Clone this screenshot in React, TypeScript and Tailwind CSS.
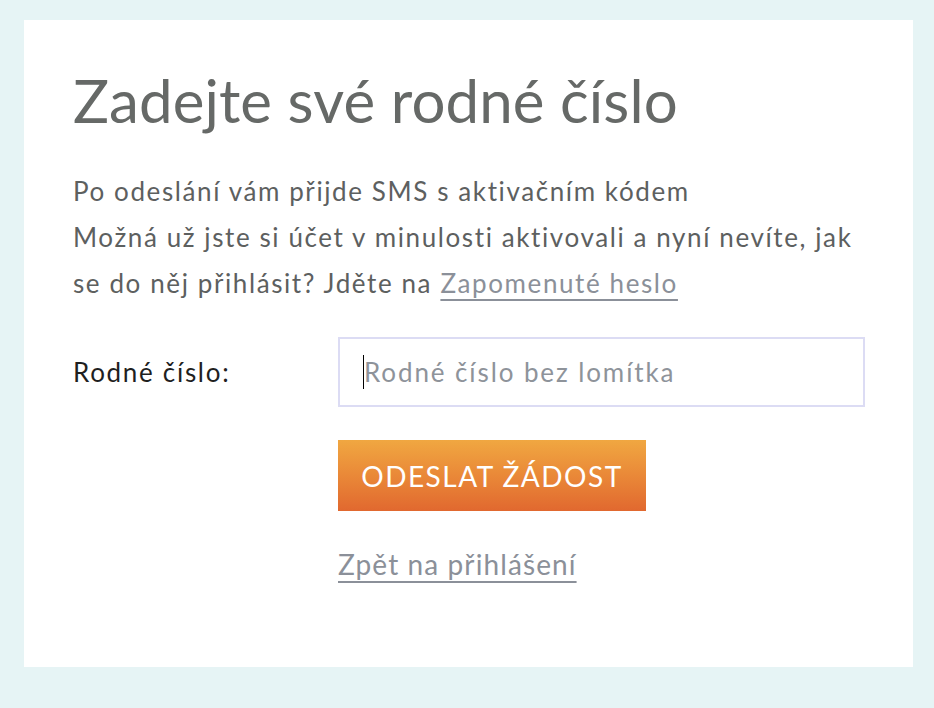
import React from "react";

export default function App() {
  return (
    <div className="min-h-[708px] w-full bg-[#e6f4f5] pt-[20px] pb-[41px] pl-[24px] pr-[21px]" style={{ fontFamily: "Lato, 'Open Sans', sans-serif" }}>
      <div className="h-[647px] bg-white pl-[49px] pr-[48px] pt-[48px]">
        <h1 className="text-[60px] leading-[64px] text-[#666967] font-normal tracking-[0.1px] whitespace-nowrap">Zadejte své rodné číslo</h1>
        <div className="mt-[36px] text-[26px] leading-[46px] text-[#5d605f] tracking-[1.6px]">
          <p className="whitespace-nowrap">Po odeslání vám přijde SMS s aktivačním kódem</p>
          <p className="whitespace-nowrap">
            Možná už jste si účet v minulosti aktivovali a nyní nevíte, jak
            <br />
            se do něj přihlásit? Jděte na{" "}
            <a href="#" className="text-[#8b9099] underline decoration-[1.5px] underline-offset-[6px]">Zapomenuté heslo</a>
          </p>
        </div>
        <div className="mt-[31px] flex items-center">
          <label className="w-[265px] shrink-0 text-[26px] text-[#1f1f1f] tracking-[1.7px] whitespace-nowrap">Rodné číslo:</label>
          <div className="flex-1 h-[70px] border-2 border-[#dcdcf4] flex items-center pl-[23px]">
            <span className="w-px h-[34px] bg-black"></span>
            <span className="text-[26px] text-[#8e939a] tracking-[1.9px] whitespace-nowrap">Rodné číslo bez lomítka</span>
          </div>
        </div>
        <div className="pl-[265px]">
          <button className="mt-[33px] w-[308px] h-[71px] bg-gradient-to-b from-[#f0a741] to-[#e1682f] text-white text-[28px] tracking-[1.5px] whitespace-nowrap">ODESLAT ŽÁDOST</button>
          <div className="mt-[36px] leading-[34px]">
            <a href="#" className="text-[28px] text-[#8b9099] tracking-[1.1px] underline decoration-[1.5px] underline-offset-[6px] whitespace-nowrap">Zpět na přihlášení</a>
          </div>
        </div>
      </div>
    </div>
  );
}
